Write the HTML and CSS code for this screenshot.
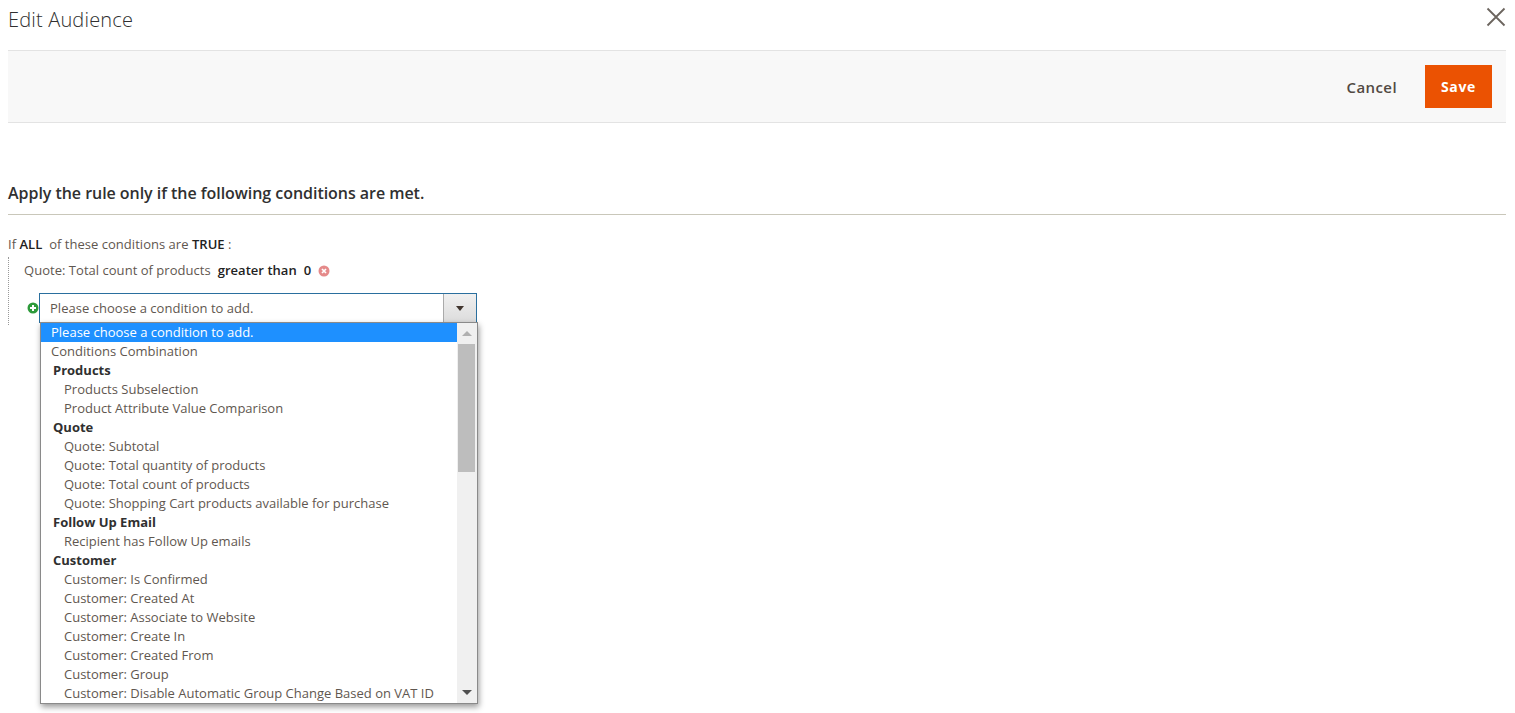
FILE: index.html
```html
<!DOCTYPE html>
<html lang="en">
<head>
    <meta charset="UTF-8">
    <meta name="viewport" content="width=device-width, initial-scale=1.0">
    <title>Edit Audience</title>
    <link rel="stylesheet" href="styles.css">
</head>
<body>
    <!-- Header -->
    <div class="modal-header">
        <div class="modal-title">Edit Audience</div>
        <svg class="close-btn" width="20" height="20" viewBox="0 0 20 20">
            <path d="M1.5 1.5L18.5 18.5M18.5 1.5L1.5 18.5" fill="none" stroke="#6b645e" stroke-width="1.8"/>
        </svg>
    </div>

    <!-- Actions -->
    <div class="actions-bar">
        <div class="cancel-btn">Cancel</div>
        <div class="save-btn">Save</div>
    </div>

    <!-- Conditions -->
    <div class="section-title">Apply the rule only if the following conditions are met.</div>

    <div class="rule-tree">
        <div class="rule-line">If <b>ALL</b>&nbsp; of these conditions are <b>TRUE</b> :</div>
        <div class="rule-children">
            <div class="rule-item">
                <span>Quote: Total count of products</span>
                <b>greater than</b>
                <b>0</b>
                <svg class="rule-icon" width="12" height="12" viewBox="0 0 12 12">
                    <circle cx="6" cy="6" r="5.5" fill="#e58a8a"/>
                    <path d="M4 4L8 8M8 4L4 8" fill="none" stroke="#fff" stroke-width="1.7"/>
                </svg>
            </div>
            <div class="rule-add">
                <svg class="rule-icon" width="12" height="12" viewBox="0 0 12 12">
                    <circle cx="6" cy="6" r="5.5" fill="#2d9a3a"/>
                    <path d="M6 3V9M3 6H9" fill="none" stroke="#fff" stroke-width="2"/>
                </svg>
                <div class="select-wrap">
                    <div class="select-box">
                        <div class="select-value">Please choose a condition to add.</div>
                        <div class="select-arrow"></div>
                    </div>

                    <!-- Open dropdown -->
                    <div class="select-list">
                        <div class="options">
                            <div class="opt selected">Please choose a condition to add.</div>
                            <div class="opt">Conditions Combination</div>
                            <div class="opt-group">Products</div>
                            <div class="opt sub">Products Subselection</div>
                            <div class="opt sub">Product Attribute Value Comparison</div>
                            <div class="opt-group">Quote</div>
                            <div class="opt sub">Quote: Subtotal</div>
                            <div class="opt sub">Quote: Total quantity of products</div>
                            <div class="opt sub">Quote: Total count of products</div>
                            <div class="opt sub">Quote: Shopping Cart products available for purchase</div>
                            <div class="opt-group">Follow Up Email</div>
                            <div class="opt sub">Recipient has Follow Up emails</div>
                            <div class="opt-group">Customer</div>
                            <div class="opt sub">Customer: Is Confirmed</div>
                            <div class="opt sub">Customer: Created At</div>
                            <div class="opt sub">Customer: Associate to Website</div>
                            <div class="opt sub">Customer: Create In</div>
                            <div class="opt sub">Customer: Created From</div>
                            <div class="opt sub">Customer: Group</div>
                            <div class="opt sub">Customer: Disable Automatic Group Change Based on VAT ID</div>
                        </div>
                        <div class="scrollbar">
                            <div class="scroll-up"></div>
                            <div class="scroll-thumb"></div>
                            <div class="scroll-down"></div>
                        </div>
                    </div>
                </div>
            </div>
        </div>
    </div>
</body>
</html>
```

FILE: styles.css
```css
* { margin: 0; padding: 0; box-sizing: border-box; }
html, body { height: 713px; overflow: hidden; }
body { font-family: 'Open Sans', 'Noto Sans', sans-serif; background: white; color: #41362f; padding: 0 9px 0 8px; font-size: 13px; }

.modal-header { height: 50px; display: flex; justify-content: space-between; align-items: flex-start; }
.modal-title { font-size: 20px; font-weight: 300; line-height: 27px; letter-spacing: 0.17px; margin-top: 6px; color: #303030; }
.close-btn { margin-top: 7px; }

.actions-bar { height: 73px; background: #f8f8f8; border-top: 1px solid #e3e3e3; border-bottom: 1px solid #e3e3e3; display: flex; justify-content: flex-end; align-items: center; padding-right: 14px; }
.cancel-btn { font-size: 15px; font-weight: 600; letter-spacing: 0.4px; color: #514943; margin-right: 28px; }
.save-btn { width: 67px; height: 43px; background: #eb5202; color: white; font-size: 14px; font-weight: 700; letter-spacing: 0.7px; display: flex; align-items: center; justify-content: center; }

.section-title { margin-top: 57px; height: 35px; border-bottom: 1px solid #c9c7ba; font-size: 16px; font-weight: 600; line-height: 27px; letter-spacing: -0.04px; color: #303030; }

.rule-tree { margin-top: 20px; font-size: 13px; line-height: 19px; letter-spacing: 0.03px; color: #5f5750; }
.rule-line b, .rule-item b { font-weight: 600; color: #222; }
.rule-children { border-left: 1px dotted #999; margin-top: 3px; height: 68px; padding: 4px 0 0 15px; }
.rule-item { display: flex; align-items: center; gap: 7px; height: 19px; }
.rule-icon { flex: none; }
.rule-add { display: flex; align-items: flex-start; margin-top: 13px; padding-left: 3px; }
.rule-add .rule-icon { margin-top: 9px; }

.select-wrap { position: relative; width: 438px; }
.select-box { height: 30px; border: 1px solid #2a6f9e; background: white; display: flex; }
.select-value { flex: 1; padding-left: 10px; line-height: 28px; }
.select-arrow { width: 33px; background: linear-gradient(#f0f0f0, #dcdcdc); border-left: 1px solid #aaa; position: relative; }
.select-arrow::after { content: ""; position: absolute; left: 12px; top: 12px; border: 4px solid transparent; border-top: 5px solid #41362f; border-bottom: none; }

.select-list { position: absolute; top: 29px; left: 1px; width: 438px; height: 382px; background: white; border: 1px solid #8a8a8a; display: flex; box-shadow: 1px 3px 6px rgba(0,0,0,0.4); z-index: 10; letter-spacing: 0; }
.options { flex: 1; overflow: hidden; }
.opt { height: 19px; line-height: 19px; padding-left: 10px; white-space: nowrap; color: #5f5750; }
.opt.selected { background: #1e90ff; color: white; }
.opt.sub { padding-left: 23px; }
.opt-group { height: 19px; line-height: 18px; padding-left: 12px; font-weight: 700; color: #303030; }

.scrollbar { width: 20px; background: #f0f0f0; display: flex; flex-direction: column; }
.scroll-up, .scroll-down { height: 21px; position: relative; flex: none; }
.scroll-up::after { content: ""; position: absolute; left: 5px; top: 8px; border: 5px solid transparent; border-bottom: 5px solid #b0b0b0; border-top: none; }
.scroll-down { margin-top: auto; }
.scroll-down::after { content: ""; position: absolute; left: 5px; top: 8px; border: 5px solid transparent; border-top: 5px solid #505050; border-bottom: none; }
.scroll-thumb { height: 128px; margin: 0 2px 0 1px; background: #bdbdbd; }
```
